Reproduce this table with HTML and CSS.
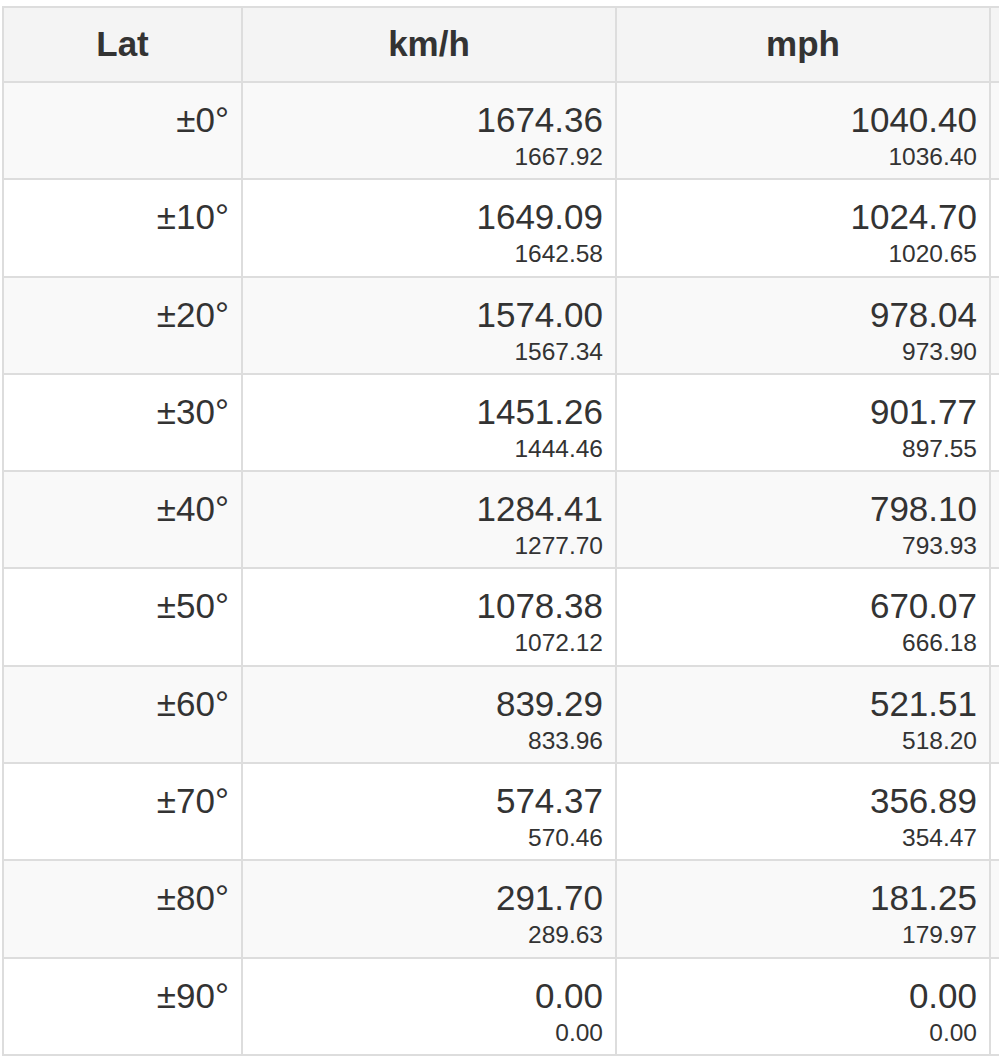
FILE: index.html
```html
<!DOCTYPE html>
<html>
<head>
<meta charset="utf-8">
<link rel="stylesheet" href="styles.css">
</head>
<body>
<table class="speed-table">
  <colgroup>
    <col class="col-lat">
    <col class="col-val">
    <col class="col-val">
    <col class="col-val">
  </colgroup>
  <thead>
    <tr><th>Lat</th><th>km/h</th><th>mph</th><th></th></tr>
  </thead>
  <tbody>
    <tr><td>±0°</td><td><div class="big">1674.36</div><div class="small">1667.92</div></td><td><div class="big">1040.40</div><div class="small">1036.40</div></td><td></td></tr>
    <tr><td>±10°</td><td><div class="big">1649.09</div><div class="small">1642.58</div></td><td><div class="big">1024.70</div><div class="small">1020.65</div></td><td></td></tr>
    <tr><td>±20°</td><td><div class="big">1574.00</div><div class="small">1567.34</div></td><td><div class="big">978.04</div><div class="small">973.90</div></td><td></td></tr>
    <tr><td>±30°</td><td><div class="big">1451.26</div><div class="small">1444.46</div></td><td><div class="big">901.77</div><div class="small">897.55</div></td><td></td></tr>
    <tr><td>±40°</td><td><div class="big">1284.41</div><div class="small">1277.70</div></td><td><div class="big">798.10</div><div class="small">793.93</div></td><td></td></tr>
    <tr><td>±50°</td><td><div class="big">1078.38</div><div class="small">1072.12</div></td><td><div class="big">670.07</div><div class="small">666.18</div></td><td></td></tr>
    <tr><td>±60°</td><td><div class="big">839.29</div><div class="small">833.96</div></td><td><div class="big">521.51</div><div class="small">518.20</div></td><td></td></tr>
    <tr><td>±70°</td><td><div class="big">574.37</div><div class="small">570.46</div></td><td><div class="big">356.89</div><div class="small">354.47</div></td><td></td></tr>
    <tr><td>±80°</td><td><div class="big">291.70</div><div class="small">289.63</div></td><td><div class="big">181.25</div><div class="small">179.97</div></td><td></td></tr>
    <tr><td>±90°</td><td><div class="big">0.00</div><div class="small">0.00</div></td><td><div class="big">0.00</div><div class="small">0.00</div></td><td></td></tr>
  </tbody>
</table>
</body>
</html>
```

FILE: styles.css
```css
html, body {
  margin: 0;
  padding: 0;
  overflow: hidden;
  background: #fff;
}

body {
  font-family: "Liberation Sans", Arial, sans-serif;
  color: #333;
}

.speed-table {
  border-collapse: collapse;
  table-layout: fixed;
  width: 1363px;
  margin: 6px 0 0 2px;
  border: 2px solid #ddd;
}

.col-lat { width: 239px; }
.col-val { width: 374px; }

.speed-table th,
.speed-table td {
  border: 2px solid #ddd;
  font-size: 35px;
  line-height: 50px;
  text-align: right;
  vertical-align: top;
  padding: 12px 12px 10px 12px;
}

.speed-table th {
  text-align: center;
  font-weight: bold;
  background: #f4f4f4;
  padding: 11px 12px 12px 12px;
}

.speed-table tbody tr {
  height: 97.3px;
}

.speed-table tbody tr:nth-child(odd) td {
  background: #f9f9f9;
}

.big {
  font-size: 35px;
  line-height: 50px;
}

.small {
  font-size: 24.5px;
  line-height: 23px;
}
```
